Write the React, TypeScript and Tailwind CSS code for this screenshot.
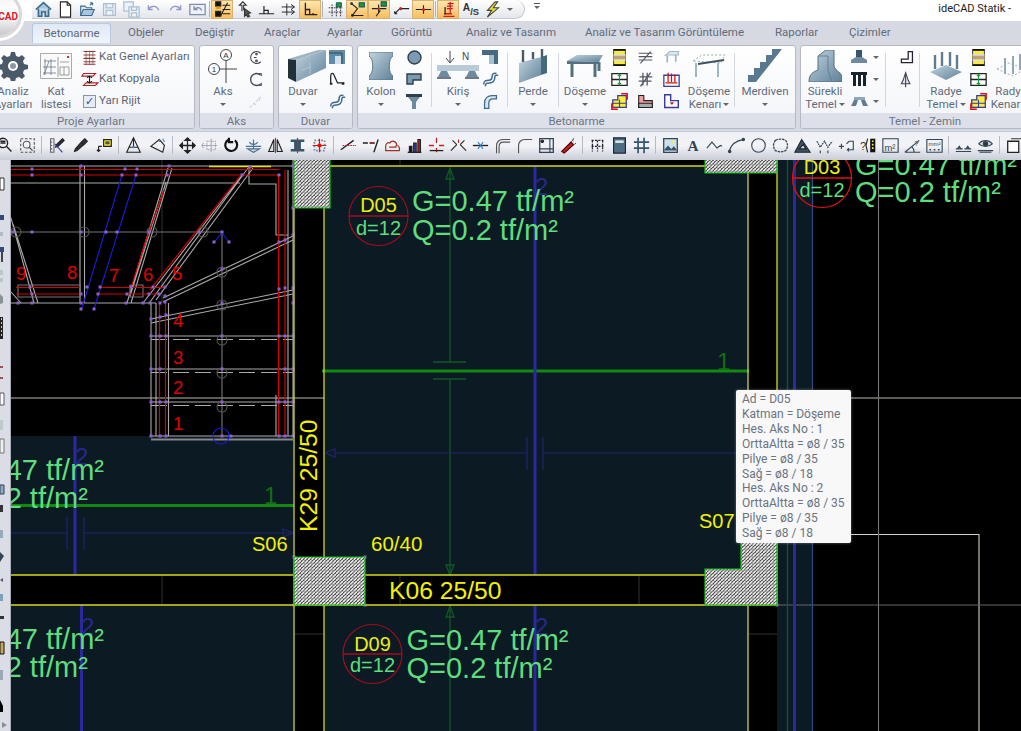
import type { ReactNode } from 'react'

const font = { fontFamily: 'Roboto, "Noto Sans", sans-serif' }

const Ic = ({ s = 18, children }: { s?: number; children: ReactNode }) => (
  <svg width={s} height={s} viewBox="0 0 20 20" fill="none" stroke="#222" strokeWidth="1.3" className="shrink-0 overflow-visible">
    {children}
  </svg>
)

const BL = '#3d6b8e'
const LB = '#a9c0d2'
const RD = '#cc1f1f'
const PP = '#3a3a9c'
const YL = '#f6ee3a'
const GN = '#1b9a3c'

// barra de acesso rapido
const qat1 = [
  <path key="a" d="M1 10 10 2l9 8M4 9v9h4v-5h4v5h4V9" stroke={BL} strokeWidth="1.9" fill="#a9c6dc" />,
  <g key="b"><path d="M4 1h8l4 4v14H4z" fill="#fff" /><path d="M12 1v4h4" /></g>,
  <g key="c" stroke={BL}><path d="M2 17V6h5l2 2h6v3" fill="#dfe8ef" /><path d="M2 17l3-7h13l-3 7z" fill="#a9c6dc" /><path d="M13 5l3-3m0 0h-3m3 0v3" /></g>,
  <g key="d" stroke={LB} strokeWidth="1.5"><path d="M3 3h14v14H3z" fill="#eef3f7" /><path d="M6 3v5h8V3M6 17v-6h8v6" /></g>,
  <g key="e" stroke={LB} strokeWidth="1.5"><path d="M1 1h11v11H1z" fill="#eef3f7" /><path d="M7 7h12v12H7z" fill="#eef3f7" /><path d="M10 7v4h6V7M10 19v-5h6v5" /></g>,
  <path key="f" d="M4 5v5h5M4 10c3-5 10-5 12 1" stroke="#8f98c8" strokeWidth="1.6" />,
  <path key="g" d="M16 5v5h-5M16 10c-3-5-10-5-12 1" stroke="#8f98c8" strokeWidth="1.6" />,
  <g key="h" stroke="#7f8bb0"><path d="M1 4h18v12H1z" fill="#eef1f6" strokeWidth="1.5" /><path d="M6 6v4h4M6 10c3-3 7-3 9 1" strokeWidth="1.5" /></g>,
]
const qat2 = [
  { on: true, icon: <g key="a"><path d="M2 1h6v5H2zM2 12h6v6H2z" fill="#111" /><path d="M2 8h6" stroke="#e8a010" strokeWidth="3" /><path d="M10 5h9M10 10h9M10 15h9M8 17 16 2" /></g> },
  { icon: <g key="b" stroke="#333"><path d="M7 12V5L4 5l4-4 4 4H9v6" /><path d="M10 9l7 5-3 1 2 3-2 1-2-3-2 2z" fill="#555" /></g> },
  { icon: <path key="c" d="M1 15h18M7 15V6M7 11h5v4" strokeWidth="1.4" /> },
  { icon: <path key="d" d="M2 7h15M13 4l4 3-4 3M2 13h15M13 10l4 3-4 3M8 3v14" strokeWidth="1.1" /> },
  { on: true, icon: <path key="e" d="M4 2v14h14M4 10h5v6M13 16v-2" strokeWidth="1.5" /> },
]
const qat3 = [
  { icon: <g key="a" strokeWidth="1"><path d="M2 8h16M2 13h16M6 4v14M11 4v14M16 4v14" strokeDasharray="2 1" /><path d="M11 2h6v5h-6z" fill={GN} stroke="#155" /></g> },
  { on: true, icon: <g key="b"><path d="M3 3l7 6-6 8h13" /><path d="M12 2h6v5h-6z" fill={GN} stroke="#155" /><circle cx="3" cy="3" r="1" /><circle cx="4" cy="17" r="1" /></g> },
  { on: true, icon: <g key="c"><path d="M1 9h17M9 4v10M6 18l5-7" /><path d="M12 1h6v5h-6z" fill={GN} stroke="#155" /><circle cx="9" cy="9" r="1.4" fill={RD} stroke="none" /></g> },
  { icon: <g key="d"><path d="M8 9h11M2 15l6-6M2 15h3M2 15v-3" /><circle cx="9" cy="9" r="1.8" fill={RD} stroke="none" /></g> },
  { on: true, icon: <g key="e"><path d="M1 10h18M10 5v10" /><circle cx="10" cy="10" r="1.8" fill={RD} stroke="none" /></g> },
]
const qat4 = [
  { on: true, icon: <g key="a" stroke={RD} strokeWidth="1.5"><path d="M4 18h13M5 15h9M12 1v14M9 3h7M8 6h7M8 9h7" /><path d="M6 7v9" stroke="#222" /></g> },
  { icon: <text key="b" x="1" y="12" fontSize="12" fontFamily="Liberation Sans" fontWeight="700" fill="#333" stroke="none">A<tspan dy="5" fontSize="11">/S</tspan></text> },
  { icon: <path key="c" d="M13 1 4 11h5l-5 8 13-11h-6l5-7z" fill="#e9e13a" stroke="#444" /> },
]

const Qcell = ({ on, icon }: { on?: boolean; icon: ReactNode }) => (
  <div className={on ? 'w-[22px] h-[19px] flex items-center justify-center bg-gradient-to-b from-[#fde6b0] to-[#f8bd5c] border border-[#d8b070]' : 'w-[22px] h-[19px] flex items-center justify-center'}>
    <Ic s={17}>{icon}</Ic>
  </div>
)
const Qsep = () => <div className="w-px h-[16px] mx-[1px] bg-[#aab0bc]" />

const tabs = [
  { t: 'Objeler', c: 'w-[67px]' },
  { t: 'Değiştir', c: 'w-[69px]' },
  { t: 'Araçlar', c: 'w-[63px]' },
  { t: 'Ayarlar', c: 'w-[64px]' },
  { t: 'Görüntü', c: 'w-[75px]' },
  { t: 'Analiz ve Tasarım', c: 'w-[119px]' },
  { t: 'Analiz ve Tasarım Görüntüleme', c: 'w-[190px]' },
  { t: 'Raporlar', c: 'w-[74px]' },
  { t: 'Çizimler', c: 'w-[70px]' },
]

// ribbon
const Caret = () => <div className="w-0 h-0 border-l-[3px] border-r-[3px] border-t-[3px] border-l-transparent border-r-transparent border-t-[#666]" />

const Big = ({ w, icon, l1, l2, caret }: { w: string; icon: ReactNode; l1: string; l2?: string; caret?: boolean }) => (
  <div className={`${w} shrink-0 flex flex-col items-center`}>
    <div className="h-[39px] flex items-center justify-center">{icon}</div>
    <div className="text-[11.5px] leading-[13px] text-[#5f6b7a] whitespace-nowrap">{l1}</div>
    {l2 ? (
      <div className="text-[11.5px] leading-[13px] text-[#5f6b7a] flex items-center gap-[2px] whitespace-nowrap">{l2}{caret && <Caret />}</div>
    ) : (
      <div className="h-[13px] flex items-center"><Caret /></div>
    )}
  </div>
)
const Col = ({ items, c = 'w-[20px]' }: { items: ReactNode[]; c?: string }) => (
  <div className={`${c} shrink-0 flex flex-col`}>
    {items.map((x, i) => (
      <div key={i} className="h-[22px] flex items-center justify-center">{x}</div>
    ))}
  </div>
)
const Dv = ({ c }: { c: string }) => <div className={`${c} w-px h-[54px] mt-[7px] shrink-0 bg-[#d2d6de]`} />

const Group = ({ w, title, children }: { w: string; title: string; children: ReactNode }) => (
  <div className={`${w} shrink-0 h-[84px] rounded-[3px] border border-[#b4b9c3] bg-gradient-to-b from-white to-[#f2f4f8] flex flex-col overflow-hidden`}>
    <div className="h-[67px] flex">{children}</div>
    <div className="h-[15px] bg-[#dde0e8] text-[11.5px] leading-[17px] text-[#6c7684] text-center">{title}</div>
  </div>
)

const steel = 'url(#steel)'
const sm = (c: ReactNode) => <Ic s={17}>{c}</Ic>

const slabSm = <g><path d="M3 1h14v18H3z" stroke="#555" fill={YL} /><path d="M3 6h14v8H3z" fill="#ddd" stroke="none" /><path d="M3 10h14" stroke="#a06a00" strokeWidth="4" opacity=".5" /><path d="M3 1h14M3 19h14" stroke="#111" strokeWidth="2" /></g>
const slabArrow = <g><path d="M1 3h18v14H1z" strokeWidth="1.5" fill="#fff" /><path d="M1 10h18" strokeWidth="1.5" /><path d="M10 4v12M8 6l2-2 2 2M8 14l2 2 2-2" stroke={GN} /></g>
const slabEdge = <g><path d="M2 8h6V3h10v14H2z" stroke={PP} strokeWidth="1.5" fill={YL} /><path d="M2 12h16M10 8v9" stroke={PP} /><path d="M12 1h7v7M1 12v7h7" stroke="#e01010" strokeWidth="1.8" /></g>

const projeIcons = {
  gear: (
    <svg width="30" height="30" viewBox="0 0 30 30" className="shrink-0">
      <path d="M13 1h4l1 4 3 1 3-2 3 3-2 3 1 3 4 1v4l-4 1-1 3 2 3-3 3-3-2-3 1-1 4h-4l-1-4-3-1-3 2-3-3 2-3-1-3-4-1v-4l4-1 1-3-2-3 3-3 3 2 3-1z" fill="#4b5a68" />
      <circle cx="15" cy="15" r="5" fill="#fff" /><circle cx="15" cy="15" r="3" fill="#8b98a5" />
    </svg>
  ),
  list: (
    <svg width="32" height="26" viewBox="0 0 32 26" fill="none" stroke="#888" className="shrink-0">
      <path d="M.5.5h31v25H.5z" fill="#fafafa" stroke="#aaa" />
      <path d="M4 8h12M3 14h13M3 20h13M5 6v16M11 6v16M9 8l-5 14" strokeWidth=".8" stroke="#6a7a86" />
      <path d="M18 4v20M20 9h9M20 14h9v8h-9zM24 14v8" strokeWidth=".8" />
      <path d="M27 3h2v2h-2z" fill="#dd3030" stroke="none" />
    </svg>
  ),
}

const Row = ({ icon, label }: { icon: ReactNode; label: string }) => (
  <div className="h-[22px] flex items-center text-[11.5px] text-[#5a6573] whitespace-nowrap">
    <div className="w-[18px] flex justify-center mr-px">{icon}</div>
    {label}
  </div>
)

const Ribbon = () => (
  <div className="h-[88px] shrink-0 bg-[#d6d9e2] pt-[2px] flex gap-[4px] ml-[-13px] w-[1040px]">
    <Group w="w-[208px]" title="Proje Ayarları">
      <Big w="w-[50px]" icon={projeIcons.gear} l1="Analiz" l2="Ayarları" />
      <Big w="w-[36px]" icon={projeIcons.list} l1="Kat" l2="listesi" />
      <div className="ml-[6px] flex flex-col">
        <Row label="Kat Genel Ayarları" icon={sm(<g stroke="#a03030"><path d="M3 3h14M3 7h14M3 11h14M3 15h14M3 18h14" /><path d="M6 2v17M10 2v17M14 2v17" stroke="#555" strokeWidth=".7" /></g>)} />
        <Row label="Kat Kopyala" icon={sm(<g><path d="M3 3h14l-3 3H1zM6 14h14l-3 3H3z" stroke="#b02020" /><path d="M10 6v8M7 8l3-2 3 2M7 12l3 2 3-2" /></g>)} />
        <Row label="Yarı Rijit" icon={<div className="w-[13px] h-[13px] border border-[#8a96a6] bg-[#e6edf6] flex items-center justify-center text-[11px] leading-none text-[#2c4f9e]">✓</div>} />
      </div>
    </Group>
    <Group w="w-[75px]" title="Aks">
      <Big w="w-[46px]" caret icon={
        <svg width="30" height="34" viewBox="0 0 30 34" fill="none" stroke="#444" className="shrink-0">
          <circle cx="18" cy="6" r="5.5" /><circle cx="6" cy="20" r="5.5" /><path d="M18 12v22M12 20h17" />
          <text x="18" y="9" fontSize="8" textAnchor="middle" fill="#333" stroke="none" fontFamily="Liberation Sans">A</text>
          <text x="6" y="23" fontSize="8" textAnchor="middle" fill="#333" stroke="none" fontFamily="Liberation Sans">1</text>
        </svg>
      } l1="Aks" />
      <Col items={[
        sm(<g stroke="#445"><path d="M15 5a7 7 0 1 0 0 10" /><path d="M7 10h3" /><circle cx="10" cy="6" r="1" /><circle cx="10" cy="14" r="1" /></g>),
        sm(<g stroke="#445" strokeWidth="1.6"><path d="M15 5a7 7 0 1 0 0 10" /><path d="M13 3h3v3M13 17h3v-3" strokeWidth="1" /></g>),
        sm(<path d="M2 17 17 3M7 12l2 2M12 7l2 2" stroke="#ccd" strokeDasharray="3 2" />),
      ]} />
    </Group>
    <Group w="w-[75px]" title="Duvar">
      <Big w="w-[48px]" icon={
        <svg width="38" height="32" viewBox="0 0 38 32" className="ml-[8px] shrink-0">
          <path d="M0 9 30 0h8L8 10z" fill="#9fb4c2" />
          <path d="M0 9l8 1v22l-8-4z" fill="#22303a" />
          <path d="M8 10 38 0v18L8 32z" fill={steel} />
          <path d="M14 20l8-3M22 12v12" stroke="#c3d1da" strokeWidth=".7" />
        </svg>
      } l1="Duvar" />
      <Col items={[
        <svg key="a" width="16" height="14" viewBox="0 0 16 14"><path d="M0 0h16v14H0z" fill="#5f8ba6" /><path d="M6 14V6h6v8z" fill="#cfe0ea" /><path d="M0 3h13v11" fill="none" stroke="#2d4a5d" /></svg>,
        sm(<g strokeWidth="1.5"><path d="M2 15V6c0-4 3-4 4-1l4 9h8" /><path d="M1 15h3M15 15h3" strokeWidth="2.2" /></g>),
        sm(<path d="M2 16c0-5 3-5 6-5s4-2 4-5 2-4 5-3M4 18c0-4 2-4 5-4s6-2 6-6 2-3 4-3" stroke={BL} strokeWidth="1.8" />),
      ]} />
    </Group>
    <Group w="w-[439px]" title="Betonarme">
      <Big w="w-[46px]" icon={
        <svg width="24" height="28" viewBox="0 0 24 28" className="shrink-0"><path d="M0 0h24v4c-5 2-5 18 0 20v4H0v-4c5-2 5-18 0-20z" fill={steel} stroke="#5c7688" /></svg>
      } l1="Kolon" />
      <Col items={[
        <svg key="a" width="15" height="15" viewBox="0 0 15 15"><circle cx="7.5" cy="7.5" r="6.5" fill="#7d9bb0" stroke="#2d3f4d" strokeWidth="1.4" /></svg>,
        <svg key="b" width="16" height="12" viewBox="0 0 16 12"><path d="M1 1h14v6H7v4H1z" fill="#7d9bb0" stroke="#2d3f4d" strokeWidth="1.4" /></svg>,
        <svg key="c" width="16" height="15" viewBox="0 0 16 15"><path d="M0 0h16v3H0z" fill="#2d3f4d" /><path d="M2 3h12l-4 5v7H6V8z" fill="#6d8a9e" /></svg>,
      ]} />
      <Dv c="ml-[7px] mr-[2px]" />
      <Big w="w-[48px]" icon={
        <svg width="42" height="30" viewBox="0 0 42 30" fill="none" className="shrink-0">
          <path d="M13 0v11M9 7l4 5 4-5" stroke="#445" />
          <text x="25" y="9" fontSize="10" fill="#445" fontFamily="Liberation Sans">N</text>
          <path d="M0 14h42v6H0z" fill="#b9cbd7" /><path d="M4 20h6l3 6H1zM32 20h6l3 6H29z" fill="#6d8a9e" />
          <path d="M0 27h14M28 27h14" stroke="#3d5262" strokeWidth="1.5" />
        </svg>
      } l1="Kiriş" />
      <Col c="w-[16px]" items={[
        <svg key="a" width="16" height="14" viewBox="0 0 16 14"><path d="M0 0h16v14H7V5H0z" fill="#456a82" /><path d="M7 5h5v9H7z" fill="#a6c0d0" /></svg>,
        sm(<path d="M2 16c0-5 3-5 6-5s4-2 4-5 2-4 5-3M4 18c0-4 2-4 5-4s6-2 6-6 2-3 4-3" stroke={BL} strokeWidth="1.8" />),
        sm(<path d="M3 18v-6c0-6 4-9 9-9h5v4h-4c-3 0-5 2-5 5v6z" fill="#dbe6ed" stroke={BL} strokeWidth="1.5" />),
      ]} />
      <Dv c="ml-[9px]" />
      <Big w="w-[50px]" icon={
        <svg width="28" height="34" viewBox="0 0 28 34" className="shrink-0"><path d="M0 14l22-6v18L0 34z" fill={steel} /><path d="M22 8l6-2v18l-6 2z" fill="#46687f" /><path d="M4 13V1M14 10V3M23 8V0" stroke="#4a5a66" strokeWidth="2.4" /></svg>
      } l1="Perde" />
      <Dv c="" />
      <div className="w-[2px] shrink-0" />
      <Big w="w-[48px]" icon={
        <svg width="36" height="22" viewBox="0 0 36 22" className="shrink-0"><path d="M0 6 10 0h26l-4 7z" fill={steel} /><path d="M0 6l32 1v2L0 9z" fill="#52707f" /><path d="M5 9v13M28 9v13M32 7v9" stroke="#54707f" strokeWidth="3" /></svg>
      } l1="Döşeme" />
      <Col items={[sm(slabSm), sm(slabArrow), sm(slabEdge)]} />
      <div className="w-[6px] shrink-0" />
      <Col items={[
        sm(<path d="M2 5h16M2 9h16M2 13h16M4 17 16 3" stroke="#556" />),
        sm(<path d="M3 7h15M2 12h15M7 2v15M12 2v15M4 18 16 2" stroke="#556" strokeWidth="1.5" />),
        sm(<g><path d="M2 3h6v6h10v8H2z" fill="#f0a0a0" /><path d="M2 12h16v5H2z" fill="#aaa" /></g>),
      ]} />
      <div className="w-[6px] shrink-0" />
      <Col items={[
        sm(<g stroke="#9fb6c6"><path d="M2 8 8 3h10v4H4z" fill="#dce7ee" /><path d="M5 8v8M15 7v8" strokeWidth="2" /></g>),
        sm(<g><path d="M1 5h18v13H1z" stroke={PP} strokeWidth="1.5" fill="#fff" /><path d="M6 2v11M10 3v10M14 4v9M3 14h14" stroke="#d01010" strokeWidth="1.5" /></g>),
        sm(<g><path d="M2 2h7v7h9v8H2z" stroke={PP} strokeWidth="1.7" fill="#fff" /><path d="M8 11h5l-2.500 3z" fill="#d01010" stroke="none" /></g>),
      ]} />
      <div className="w-[3px] shrink-0" />
      <Big w="w-[50px]" caret icon={
        <svg width="34" height="24" viewBox="0 0 34 24" fill="none" className="shrink-0"><path d="M1 7 10 1h23l-4 8z" stroke="#9aa" strokeDasharray="2 2" /><path d="M6 10 32 6" stroke="#3d5262" strokeWidth="2" /><path d="M4 9v14M26 9v14" stroke="#9fb6c6" strokeWidth="2" /></svg>
      } l1="Döşeme" l2="Kenarı" />
      <Dv c="" />
      <Big w="w-[60px]" icon={
        <svg width="34" height="33" viewBox="0 0 34 33" className="shrink-0"><path d="M0 26h6v-7h6v-6h6V6h6V0h10L8 33H0z" fill="#58798f" /></svg>
      } l1="Merdiven" />
    </Group>
    <Group w="w-[250px]" title="Temel - Zemin">
      <Big w="w-[48px]" caret icon={
        <svg width="34" height="32" viewBox="0 0 34 32" className="shrink-0"><path d="M1 32c0-8 4-10 9-12V6l8-6h8v16c2 6 8 6 8 12v4z" fill={steel} stroke="#556f80" /><path d="M10 6h10v14l4 12" fill="none" stroke="#64808f" /></svg>
      } l1="Sürekli" l2="Temel" />
      <Col items={[
        <svg key="a" width="16" height="15" viewBox="0 0 16 15"><path d="M5 0h6v7H5z" fill="#35566c" /><path d="M0 10l5-3h6l5 3v3H0z" fill="#6d8a9e" /></svg>,
        <svg key="b" width="16" height="14" viewBox="0 0 16 14"><path d="M0 0h16v3H0z" fill="#16222c" /><path d="M2 3h3v11H2zM7 3h3v11H7zM12 3h3v11h-3z" fill="#16222c" /></svg>,
        <svg key="c" width="17" height="9" viewBox="0 0 17 9"><path d="M3 0h11v3H3z" fill="#8ea7b8" /><path d="M0 9l3-6h4l-2 6zM17 9l-3-6h-4l2 6z" fill="#607c90" /></svg>,
      ]} />
      <div className="w-[14px] shrink-0 flex flex-col">
        <div className="h-[22px] flex items-center justify-center"><Caret /></div>
        <div className="h-[22px] flex items-center justify-center"><Caret /></div>
        <div className="h-[22px] flex items-center justify-center"><Caret /></div>
      </div>
      <Dv c="ml-[2px] mr-[10px]" />
      <Col items={[
        sm(<path d="M4 16v-4h8V3h5v13z" strokeWidth="1.5" stroke="#223" />),
        sm(<g stroke="#445"><path d="M9 2l-3 9-2 4h10l-2-4z" fill="#e5ebf0" /><path d="M9 2v17" /></g>),
        <div key="c" className="h-[17px]" />,
      ]} />
      <Dv c="ml-[3px] mr-[4px]" />
      <Big w="w-[44px]" caret icon={
        <svg width="32" height="30" viewBox="0 0 32 30" className="shrink-0"><path d="M0 21l16-7 16 7-16 8z" fill={steel} /><path d="M5 18V4M12 15V1M20 15V1M27 18V4" stroke="#607c90" strokeWidth="2.400" /></svg>
      } l1="Radye" l2="Temel" />
      <Col items={[sm(slabSm), sm(slabArrow), sm(slabEdge)]} />
      <Big w="w-[46px]" caret icon={
        <svg width="30" height="28" viewBox="0 0 30 28" fill="none" className="shrink-0"><path d="M1 17l12-6 16 6-12 7z" stroke="#aab" strokeDasharray="2 2" /><path d="M9 22V6M17 22V4M24 18V2" stroke="#8fa8b8" strokeWidth="2" /></svg>
      } l1="Radye" l2="Kenarı" />
    </Group>
  </div>
)

// barra de desenho
const tb: ReactNode[][] = [
  [
    <g key="a"><circle cx="7" cy="7" r="5.500" strokeWidth="1.6" /><path d="M11 11l6 6M4 7h6M4 5h6" strokeWidth="1.6" /></g>,
    <g key="b" stroke="#555"><path d="M2 2h16v16H2z" strokeDasharray="3 2" /><circle cx="9" cy="9" r="4" /><path d="M12 12l4 4" strokeWidth="1.5" /></g>,
  ],
  [
    <g key="a"><path d="M3 2v16h4V2zM3 6h2M3 10h2M3 14h2" stroke="#667" /><path d="M17 2l2 2-7 7-3 1 1-3z" fill="#234" /><path d="M8 8l9 10" stroke={PP} /></g>,
    <path key="b" d="M15 2l3 3-4 4-3-3zM11 6l-7 8-1 3 3-1 8-7" fill="#2a3640" />,
    <g key="c"><path d="M9 3h9v8H9z" fill={YL} strokeWidth="1.4" /><path d="M11 6h5M11 8h5" /><path d="M3 11v6M1 15l2 2 2-2M3 11h4" /></g>,
  ],
  [
    <g key="a"><path d="M10 1 2 18h16zM4 12h12M10 1v11" /><circle cx="10" cy="12" r="1.300" fill="#38c" stroke="none" /></g>,
    <g key="b"><path d="M1 11l10-8 6 7-2 8z" /><path d="M15 2l2 4M11 3v3" stroke="#38c" /></g>,
  ],
  [
    <path key="a" d="M10 1v18M1 10h18M10 1 7 4h6zM10 19l-3-3h6zM1 10l3-3v6zM19 10l-3-3v6z" fill="#111" strokeWidth="1.5" />,
    <g key="b" stroke="#aab"><path d="M7 5h10v10H7z" strokeDasharray="2 1" /><path d="M1 10h18M12 2v16M3 7l-2 3 2 3" /></g>,
    <path key="c" d="M14 4a7 7 0 1 1-7-1M7 1v5h5" strokeWidth="2.600" stroke="#111" />,
    <g key="d" stroke="#4a6f96"><path d="M1 11h18M10 3v15M5 6a6 6 0 0 0 10 0" /><path d="M3 14h14l-7 4z" fill="#cfe0ee" /></g>,
    <g key="e"><path d="M8 3v14H2zM12 3v14h6z" fill="#dbe2e8" /><path d="M10 1v18" stroke="#b03030" /></g>,
    <g key="f"><path d="M2 3h16v3H2zM2 14h16v3H2zM6 6h8v8H6z" fill="#35566c" stroke="none" /><path d="M10 1v18" stroke="#d02020" strokeWidth="1.4" /></g>,
    <g key="g"><path d="M4 4h12v12H4z" stroke="#789" strokeDasharray="2 2" strokeWidth="2" /><path d="M2 10h16M10 2v16M8 8l4 4M12 8l-4 4" stroke="#e01010" strokeWidth="1.400" /></g>,
  ],
  [
    <g key="a"><path d="M1 15 16 4" strokeWidth="1.6" /><path d="M3 10h16" stroke="#c02020" strokeDasharray="2 1" strokeWidth="1.400" /></g>,
    <g key="b"><path d="M14 18 19 3" strokeWidth="1.600" /><path d="M1 7h15" strokeWidth="1.600" stroke="#222" strokeDasharray="6 2" /><path d="M9 7h5" stroke="#c02020" strokeWidth="1.400" /></g>,
    <g key="c" stroke="#a03020" strokeWidth="1.400"><path d="M2 16h16c1-4-1-6-3-6 0-5-6-7-8-3-3-1-5 1-5 4z" /><path d="M6 12h8v-2" /></g>,
    <g key="d"><path d="M2 18h16" strokeWidth="1.600" /><path d="M4 11h3v7H4z" fill="#111" /><path d="M9 7h3v11H9z" fill={PP} /><path d="M14 3h3v15h-3z" fill="#c02020" /></g>,
    <g key="e" stroke="#c02020"><path d="M1 10h6M13 10h6M10 1v6M10 13v5" strokeWidth="1.500" /><path d="M2 16h16" stroke="#222" strokeWidth="1.500" /></g>,
    <g key="f"><path d="M1 16l7-7M19 16l-7-7M3 4l5 5M17 4l-5 5" strokeWidth="1.500" stroke="#333" /><path d="M10 3v4" stroke="#c02020" /></g>,
    <g key="g"><path d="M1 10h18" strokeWidth="1.600" /><path d="M7 6l6 8M13 6l-6 8" stroke="#38c" strokeWidth="1.300" /></g>,
    <g key="h" stroke="#555" strokeWidth="1.300"><path d="M3 19V10c0-4 3-7 7-7h9M6 19V11c0-3 2-5 5-5h8" /></g>,
    <g key="i" stroke="#555" strokeWidth="1.300"><path d="M3 19V10c0-4 3-7 7-7h9" /></g>,
    <g key="j"><path d="M2 2h16v16H2z" strokeWidth="1.500" stroke="#345" /><path d="M2 14h16M14 2v16" stroke="#345" /><circle cx="5" cy="5" r="1.500" fill="#345" /></g>,
    <g key="k"><path d="M2 17l11-11 3 3L5 19z" fill="#c02020" stroke="#500" /><path d="M13 6l3-4M16 9l3-2M15 3l1 2" stroke="#333" strokeDasharray="1 1" /></g>,
  ],
  [
    <g key="a" stroke="#223"><path d="M3 4h14M3 11h14M4 4v13M10 4v13M16 4v13" strokeDasharray="2.500 1.500" strokeWidth="1.500" /></g>,
    <g key="b"><path d="M3 1h14v18H3z" fill="#4d6e82" stroke="#223" /><path d="M5 4h10v3H5z" fill="#dbe6ed" stroke="none" /></g>,
    <path key="c" d="M1 6h18M1 13h18M6 1v18M13 1v18" stroke="#35566c" strokeWidth="2" />,
  ],
  [
    <g key="a"><path d="M2 2h16v16H2z" fill="#cfe0ea" stroke="#345" strokeWidth="1.500" /><path d="M2 16l5-6 4 4 3-3 4 5z" fill="#34536a" stroke="none" /><circle cx="13" cy="6" r="1.500" fill={YL} stroke="none" /></g>,
    <text key="b" x="4" y="17" fontSize="18" fontWeight="700" fontFamily="Liberation Serif" fill="#345" stroke="none">A</text>,
    <path key="c" d="M1 13l6-7 6 7 4-3 2 1" stroke="#345" />,
    <g key="d" stroke="#345"><path d="M1 17C4 8 9 4 18 3" strokeWidth="1.500" /><circle cx="2" cy="17" r="1.400" fill="#345" /><circle cx="18" cy="3" r="1.400" fill="#345" /></g>,
    <circle key="e" cx="10" cy="10" r="8" stroke="#345" strokeWidth="1.300" />,
    <path key="f" d="M4 4c4-2 8-2 12 0 3 4 3 8 0 12-4 2-8 2-12 0-3-4-3-8 0-12z" stroke="#345" strokeWidth="1.500" strokeDasharray="3 1" />,
    <g key="g"><path d="M1 18 9 3l10 15z" fill="#35566c" /><path d="M6 14l5-5 3 5z" fill="#cfe0ea" /></g>,
    <g key="h" stroke="#345"><path d="M1 5l4 7 5-7 4 7 5-7" strokeDasharray="2 1" strokeWidth="1.500" /><path d="M5 16v3M14 16v3" /></g>,
    <g key="i"><path d="M1 11h6M4 8v6M10 8l3-3h5v10h-7M13 13l-2 2 2 2" stroke="#345" strokeWidth="1.300" /></g>,
    <g key="j"><text x="0" y="15" fontSize="13" fill="#333" stroke="none" fontFamily="Liberation Sans">?</text><path d="M9 2 7 10l2 8" /><path d="M12 2h6v16h-6z" fill="#111" stroke="none" /><path d="M15 4v12" stroke={YL} strokeDasharray="2 2" strokeWidth="2" /></g>,
    <g key="k" stroke="#345"><path d="M1 2h18v16H1z" /><text x="3" y="16" fontSize="11" fontFamily="Liberation Sans" fill="#345" stroke="none">m²</text></g>,
    <g key="l" stroke="#345"><path d="M1 18 18 4M1 18h18M9 11c2 2 3 4 3 7" /><text x="12" y="10" fontSize="9" fontFamily="Liberation Sans" fill="#345" stroke="none">?</text></g>,
    <g key="m" stroke="#345"><path d="M1 3h18v15H1z" /><text x="3" y="11" fontSize="7" fontFamily="Liberation Sans" fill="#345" stroke="none">mm²</text><path d="M4 15h2M9 15h2M14 15h2" strokeWidth="2" /></g>,
  ],
  [
    <path key="a" d="M1 14h8M11 14h8M3 14l2-3 2 3M13 14l2-3 2 3M1 17h18" stroke="#345" />,
    <g key="b" stroke="#345"><path d="M2 8c4-5 12-5 16 0-4 4-12 4-16 0z" fill="#cfd8df" /><circle cx="10" cy="8" r="2.500" fill="#333" /><path d="M1 16h18M3 18h14" /></g>,
  ],
  [
    <g key="a"><path d="M6 2h13v13" stroke="#333" /><path d="M2 5h13v13H2z" fill="#fff" stroke="#222" strokeWidth="1.500" /></g>,
  ],
]
const tbGroup = ['', 'gap-[2px]', 'gap-[3px]', '', '', '', '', '', '']

const Toolbar = () => (
  <div className="h-[29px] shrink-0 bg-gradient-to-b from-[#eef0f5] via-[#f2f3f7] to-[#c9cdd6] border-t border-[#c6cad3] flex items-center ml-[-6px] w-[1040px] pb-[2px]">
    {tb.map((g, i) => (
      <div key={i} className="flex items-center">
        {i > 0 && <div className="w-px h-[18px] mx-[3px] bg-[#b5bac4]" />}
        <div className={`flex items-center ${tbGroup[i]}`}>
          {g.map((ic, j) => (
            <div key={j} className="w-[22px] flex justify-center"><Ic s={17}>{ic}</Ic></div>
          ))}
        </div>
      </div>
    ))}
  </div>
)

// tira lateral, so a borda dos icones aparece
const SideBar = () => (
  <div className="w-[11px] shrink-0 bg-[#dadde5] border-r border-[#a9aeb8]">
    <svg width="10" height="571" viewBox="0 160 10 571">
      <path d="M0 178h4v12H0z" fill="#fff" stroke="#333" />
      <path d="M0 215h4v5H0z" fill="#344a78" />
      <path d="M0 232h3v4H0z" fill="#b4bac2" />
      <path d="M0 247h4v5H0z" fill="#344a78" /><path d="M2 252v10" stroke="#111" strokeWidth="1.500" />
      <path d="M0 270h3v5H0zM0 278h3v4H0z" fill="#bfc4cb" />
      <path d="M0 294l3 3v6l-3 1z" fill="#8b9098" />
      <path d="M0 317h3v22H0z" fill="#222" /><path d="M1.500 318v20" stroke="#e9d838" strokeDasharray="2 2" />
      <path d="M0 367h3M0 378h3" stroke="#8b2020" strokeWidth="1.500" />
      <path d="M0 393h4v12H0z" fill="#fff" stroke="#556" />
      <path d="M0 420h3v10H0z" fill="#c2c6cd" />
      <path d="M0 439h4v14H0z" fill="#eef0f3" stroke="#777" />
      <path d="M0 485h4v9H0z" fill="#8fa8c4" stroke="#345" />
      <path d="M0 505h3v7H0z" fill="#333" />
      <path d="M0 530h3v8H0z" fill="#9ab" />
      <path d="M0 552l4 4-4 6z" fill="#345" />
      <path d="M0 580l3-2v4z" fill="#556" /><path d="M0 594h3v7H0z" fill="#7fa0bb" />
      <path d="M0 616h4v3H0z" fill="#333" />
      <path d="M0 642h4v12H0z" fill="#c8a860" stroke="#111" />
      <path d="M0 670h3v10H0z" fill="#9aa7b5" />
      <path d="M0 700l3 6v6H0z" fill="#000" />
      <path d="M2 722l5 3-5 3z" fill="#8a8f98" />
    </svg>
  </div>
)

const YELLOW = '#d8d81e'
const GRIP = '#8a62cc'
const grips: number[][] = [
  [32, 169], [81, 166], [125, 169], [137, 169], [169, 166], [32, 175], [81, 175], [122, 175], [136, 175], [167, 175], [250, 167], [242, 175], [279, 175],
  [293, 166], [293, 208], [13, 232], [32, 232], [81, 232], [106, 232], [117, 232], [149, 232], [199, 232], [222, 232], [214, 242], [229, 242],
  [279, 242], [285, 240], [293, 235], [222, 269], [30, 287], [87, 287], [100, 287], [131, 287], [153, 287], [165, 287], [32, 294], [81, 294], [98, 294],
  [127, 294], [149, 294], [159, 294], [165, 296], [18, 303], [32, 303], [81, 303], [126, 303], [143, 303], [150, 303], [160, 303], [165, 302], [222, 303],
  [279, 289], [285, 288], [293, 288], [293, 303], [81, 309], [94, 309], [151, 319], [160, 317], [166, 315], [151, 336], [160, 336], [166, 336], [222, 336],
  [279, 336], [285, 336], [293, 336], [151, 369], [160, 369], [222, 369], [285, 369], [293, 369], [151, 402], [160, 402], [166, 402], [222, 402], [279, 402], [285, 402], [293, 402],
  [151, 436], [160, 436], [166, 436], [222, 436], [231, 436], [279, 436], [285, 436], [293, 436],
  [294, 557], [365, 557], [294, 605], [324, 605], [365, 605], [777, 605], [294, 172],
]

const treads = [336, 369, 402, 436]
const breakPts = [
  [16, 232], [84, 232], [152, 232], [203, 232], [222, 272], [222, 305], [222, 340], [222, 373], [222, 407],
]

const Hatch = ({ d }: { d: string }) => <path d={d} fill="url(#hatch)" stroke="#0fc40f" strokeWidth="1.200" />

const Loads = ({ x, y1, y2 }: { x: number; y1: number; y2: number }) => (
  <g fill="#5fdd7c" fontSize="29" fontFamily='"Liberation Sans", Arial, sans-serif'>
    <text x={x} y={y1}>G=0.47 tf/m²</text>
    <text x={x} y={y2}>Q=0.2 tf/m²</text>
  </g>
)

const SlabTag = ({ cx, cy, name, color = '#a50c1c', nameY, dY }: { cx: number; cy: number; name: string; color?: string; nameY: number; dY: number }) => (
  <g fontFamily='"Liberation Sans", Arial, sans-serif' fontSize="20" textAnchor="middle">
    <circle cx={cx} cy={cy} r="29.500" fill="none" stroke={color} strokeWidth="1.200" />
    <path d={`M${cx - 29.500} ${cy}h59`} stroke={color} strokeWidth="1.400" />
    <text x={cx} y={nameY} fill="#ecec16">{name}</text>
    <text x={cx} y={dY} fill="#5fdd7c">d=12</text>
  </g>
)

const Drawing = () => (
  <svg width="1010" height="571" viewBox="11 160 1010 571" className="block" fontFamily='"Liberation Sans", Arial, sans-serif'>
    <defs>
      <pattern id="hatch" patternUnits="userSpaceOnUse" width="3.500" height="3.500">
        <path d="M0 0h3.500v3.500H0z" fill="#f6f6f6" />
        <path d="M-1 2.500 2.500-1M1 4.500l3.500-3.500" stroke="#111" strokeWidth="1" />
      </pattern>
    </defs>
    <path d="M0 0h1100v800H0z" fill="#000" />

    {/* lajes */}
    <g fill="#0c1a24">
      <path d="M324 166h424v409H324z" />
      <path d="M0 436h293v139H0z" />
      <path d="M324 605h424v126H324z" />
      <path d="M0 605h293v126H0z" />
      <path d="M777 160h36v571h-36z" />
    </g>

    {/* linhas de referencia */}
    <g stroke="#b9b9b0" strokeWidth="1.100" fill="none">
      <path d="M11 398h313M851 398h170" />
      <path d="M851 534.500h128V731" stroke="#d6cfc4" />
      <path d="M878.500 160v571" stroke="#77787a" />
      <path d="M777 605h244" stroke="#666" />
    </g>
    <g stroke="#333" strokeWidth="1">
      <path d="M162 160v143M162 575v30M400 575v30M639 575v30M294 634h30M748 634h29M400 160v6" />
    </g>

    {/* merdiven */}
    <g stroke="#aaa" strokeWidth="1.100" fill="none">
      <path d="M11 166h282M11 183h229M249 166v18h27v51h12" />
      <path d="M293 160v276M288 170v266M276 395v41" />
      <path d="M80 166v137M84.500 166v137" />
      <path d="M168 168 127 303M172 168 131 303M166 182 130 296" />
      <path d="M243 174 143 303M248 168 150 302M253 168 156 300" />
      <path d="M11 218 34 303M13 224 38 303M11 292 21 303" />
      <path d="M11 303h145" />
      <path d="M18 285h62v12H18zM130 285h13v12h-13z" stroke="#777" />
      <path d="M151 303v133M156 303v133M168.500 303v133" />
      <path d="M151 319 293 290M151 323 293 294M163 298 293 236M163 302 293 240" />
      <path d="M11 232h211M222 232v204" stroke="#777" />
      {treads.map((y) => (
        <g key={y}>
          <path d={`M151 ${y}h142`} />
          <path d={`M151 ${y + 3.500}h142`} strokeDasharray="16 6" />
        </g>
      ))}
      <path d="M151 439.500h142" stroke="#888" strokeWidth="2" />
      {breakPts.map(([x, y]) => (
        <circle key={`${x}-${y}`} cx={x} cy={y} r="5" stroke="#555" />
      ))}
    </g>
    <g stroke="#d80000" strokeWidth="1.200" fill="none">
      <path d="M11 169.500h268M11 175h268" />
      <path d="M278.500 175v261M285 170v266" />
      <path d="M159.500 303v133M165.500 303v133" />
      <path d="M16 287.500h64M100 287.500h65M16 294h64M100 294h60" />
      <path d="M240 176 150 290M164 190 146 240 132 285" />
    </g>
    <path d="M209 166.500h62" stroke="#e6e600" strokeWidth="1.500" />
    <g stroke="#1a1ae0" strokeWidth="1.100" fill="none">
      <path d="M122 175 82 308M136 175 94 309" />
      <path d="M214.500 242 222 233l7 9" />
      <circle cx="221" cy="436" r="8" />
    </g>
    <g fill="#e00000" fontSize="18.500">
      <text x="16" y="280">9</text>
      <text x="67" y="279">8</text>
      <text x="109" y="282">7</text>
      <text x="143" y="280.500">6</text>
      <text x="172" y="280">5</text>
      <text x="173" y="326.500">4</text>
      <text x="173" y="364">3</text>
      <text x="173" y="394">2</text>
      <text x="173" y="430">1</text>
    </g>
    {grips.map(([x, y]) => (
      <path key={`${x}-${y}`} d={`M${x - 1.500} ${y - 1.500}h3v3h-3z`} fill={GRIP} />
    ))}

    {/* eixos de calculo */}
    <g stroke="#0f5a22" strokeWidth="1.300" fill="none">
      <path d="M450 170v192M450 379v196M450 605v126" />
      <path d="M433 362h33M433 379h33" />
      <path d="M450 168l-4 11h8zM450 575l-4-10h8zM450 606l-4 11h8z" />
      <path d="M787.500 160v571" />
    </g>
    <g stroke="#128a12" strokeWidth="3">
      <path d="M322 371h427M11 505.500h283" />
    </g>
    <g stroke="#2a2a9e" strokeWidth="3">
      <path d="M535 166v409M535 605v126M75 436v139M81.500 605v126M794.500 160v571" />
    </g>
    <path d="M812.500 160v571" stroke="#2c4f80" strokeWidth="1.200" />
    <g stroke="#22226e" strokeWidth="1.200" fill="none">
      <path d="M335 453h192M543 453h192M527 437v33M543 437v33M11 533h56M84 533h209M67 517v33M84 517v33" />
      <path d="M325 453l10-4v8zM293 533l-10-4v8z" />
    </g>
    <g fontSize="24" fill="#116e11">
      <text x="717" y="370">1</text>
      <text x="264" y="503.500">1</text>
    </g>
    <g fontSize="24" fill="#28288c">
      <text x="535" y="195">2</text>
      <text x="75" y="465">2</text>
      <text x="81" y="635">2</text>
      <text x="535" y="635">2</text>
    </g>

    {/* vigas */}
    <g stroke={YELLOW} strokeWidth="1.300" fill="none">
      <path d="M330 166h418M11 575h283M365 575h340M11 605h766" />
      <path d="M294 208v523M324 208v523M748 173v396M748 605v126M777 160v445" />
    </g>

    {/* pilares */}
    <Hatch d="M294 154h36v54h-36z" />
    <Hatch d="M294 557h71v48h-71z" />
    <Hatch d="M705 154h72v19h-72z" />
    <Hatch d="M741 540h36v65h-72v-36h36z" />

    {/* textos */}
    <g fill="#f2f200">
      <text x="252" y="550.500" fontSize="20">S06</text>
      <text x="371" y="551" fontSize="20.500">60/40</text>
      <text x="699" y="527.500" fontSize="20">S07</text>
      <text x="389" y="599" fontSize="24.700">K06 25/50</text>
      <text transform="translate(316.500 532) rotate(-90)" fontSize="24.700">K29 25/50</text>
    </g>
    <SlabTag cx={378.500} cy={216} name="D05" nameY={212} dY={235} />
    <Loads x={412} y1={211} y2={240} />
    <SlabTag cx={372.500} cy={654} name="D09" nameY={650.500} dY={671.500} />
    <Loads x={406.500} y1={650} y2={677.500} />
    <SlabTag cx={822} cy={178} name="D03" color="#e81010" nameY={174} dY={196.500} />
    <Loads x={855} y1={175} y2={201.500} />
    <Loads x={-58} y1={480} y2={508} />
    <Loads x={-58} y1={649} y2={677} />
  </svg>
)

const tip = [
  'Ad = D05',
  'Katman = Döşeme',
  'Hes. Aks No : 1',
  'OrttaAltta = ø8 / 35',
  'Pilye = ø8 / 35',
  'Sağ = ø8 / 18',
  'Hes. Aks No : 2',
  'OrttaAltta = ø8 / 35',
  'Pilye = ø8 / 35',
  'Sağ = ø8 / 18',
]

export default function App() {
  return (
    <div className="relative w-[1021px] h-[731px] overflow-hidden flex flex-col bg-white" style={font}>
      <svg width="0" height="0" className="absolute">
        <defs>
          <linearGradient id="steel" x1="0" y1="0" x2="1" y2="1">
            <stop offset="0" stopColor="#c2d4df" />
            <stop offset="1" stopColor="#5f8199" />
          </linearGradient>
        </defs>
      </svg>

      {/* titulo */}
      <div className="h-[21px] shrink-0 flex items-start bg-white">
        <div className="ml-[32px] h-[19px] w-[493px] flex items-center bg-gradient-to-b from-white to-[#e3e6ec] border-b border-r border-[#c5c9d1] rounded-br-[12px] rounded-tr-[12px]">
          {qat1.map((ic, i) => (
            <Qcell key={i} icon={ic} />
          ))}
          <Qsep />
          {qat2.map((q, i) => (
            <Qcell key={i} on={q.on} icon={q.icon} />
          ))}
          <Qsep />
          {qat3.map((q, i) => (
            <Qcell key={i} on={q.on} icon={q.icon} />
          ))}
          <Qsep />
          {qat4.map((q, i) => (
            <Qcell key={i} on={q.on} icon={q.icon} />
          ))}
          <div className="ml-[4px]"><Caret /></div>
        </div>
        <div className="ml-[9px] mt-[3px] flex flex-col items-center gap-[2px]">
          <div className="w-[6px] h-px bg-[#555]" />
          <Caret />
        </div>
        <div className="ml-auto mr-[10px] text-[11px] leading-[18px] text-[#222] whitespace-nowrap">ideCAD Statik -</div>
      </div>

      {/* abas */}
      <div className="h-[22px] shrink-0 bg-[#d6d9e2] flex items-end text-[11.5px] text-[#606b79]">
        <div className="ml-[32px] w-[79px] h-[20px] rounded-t-[3px] border border-b-0 border-[#b8c8de] bg-gradient-to-b from-[#dfe9f6] to-[#f1f5fb] text-center leading-[19px]">Betonarme</div>
        <div className="w-[17px] shrink-0" />
        {tabs.map((t) => (
          <div key={t.t} className={`${t.c} shrink-0 h-[20px] leading-[19px] whitespace-nowrap`}>{t.t}</div>
        ))}
      </div>

      <Ribbon />
      <Toolbar />

      <div className="flex-1 flex min-h-0">
        <SideBar />
        <div className="relative flex-1 bg-black overflow-hidden">
          <Drawing />
          <div className="absolute left-[725px] top-[230px] w-[115px] h-[153px] bg-[#f8f8f8] rounded-[2px] shadow-[0_0_3px_rgba(255,255,255,0.4)] pt-[2px] pl-[6px] text-[12px] leading-[14.900px] text-[#6a737e] whitespace-nowrap">
            {tip.map((l, i) => (
              <div key={i}>{l}</div>
            ))}
          </div>
        </div>
      </div>

      {/* logo */}
      <div className="absolute left-[-25px] top-[-9px] w-[47px] h-[47px] rounded-full border-[3px] border-[#d9d9dc] bg-gradient-to-b from-[#f4f4f4] via-white to-[#c9c9cd] flex items-center justify-end pr-[1px] pt-[3px] shadow-[0_0_0_3px_#fff]">
        <span className="text-[10px] font-bold text-[#d6202a]">CAD</span>
      </div>
    </div>
  )
}
